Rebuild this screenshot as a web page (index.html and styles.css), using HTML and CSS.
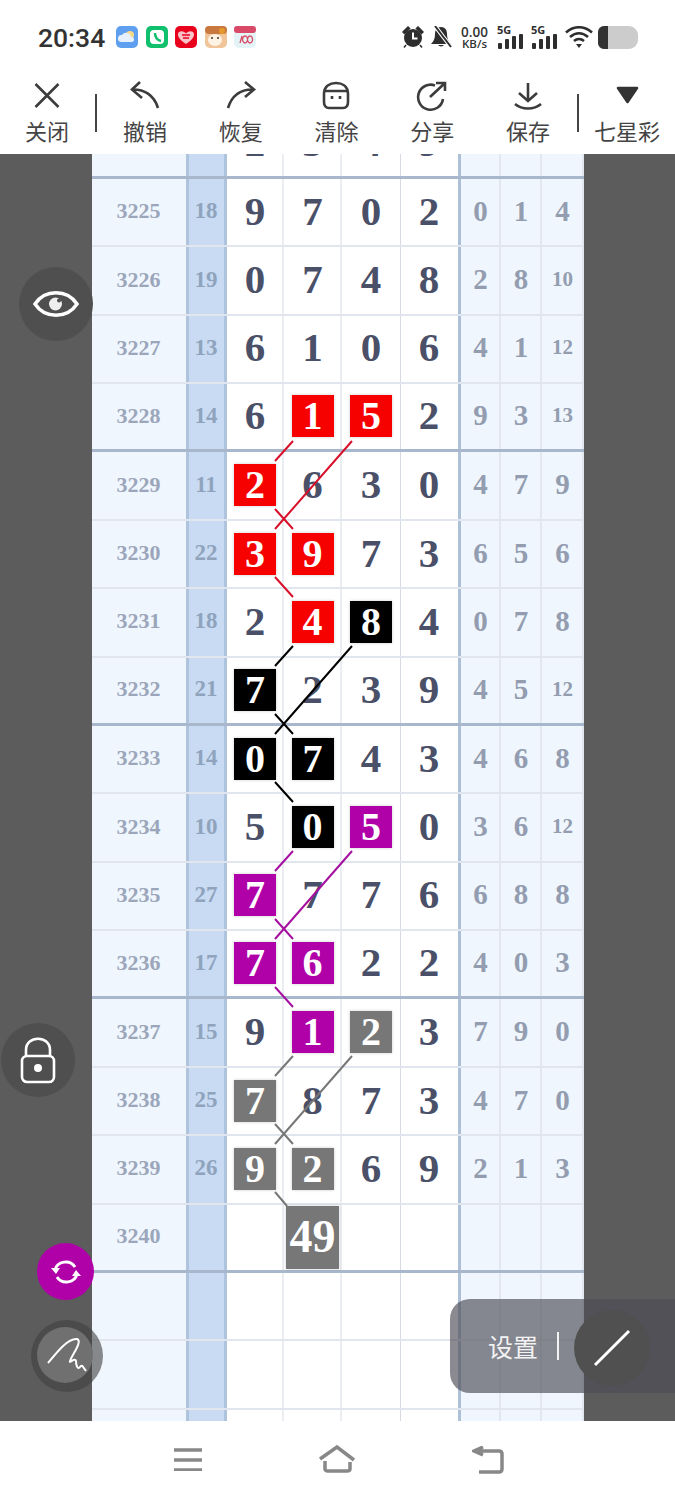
FILE: index.html
```html
<!DOCTYPE html>
<html lang="zh">
<head>
  <meta charset="UTF-8">
  <meta name="viewport" content="width=device-width, initial-scale=1.0">
  <title>七星彩</title>
  <link rel="stylesheet" href="styles.css">
</head>
<body>
  <div class="page">
    <header>
      <div class="status-bar">
        <span class="time">20:34</span>
        <div class="apps">
          <svg viewBox="0 0 22 22"><rect width="22" height="22" rx="5" fill="#5f9fef"/><circle cx="14" cy="9" r="4" fill="#f6d98c"/><path d="M5 16a3.500 3.500 0 0 1 1-7 5 5 0 0 1 9 2 2.500 2.500 0 0 1 1 5z" fill="#e6f1fd"/></svg>
          <svg viewBox="0 0 22 22"><rect width="22" height="22" rx="5" fill="#10c06c"/><rect x="4" y="4" width="14" height="14" rx="4" fill="#fff"/><path d="M9 7c0 4 2 7 6 8" stroke="#10c06c" stroke-width="2.500" fill="none"/></svg>
          <svg viewBox="0 0 22 22"><rect width="22" height="22" rx="5" fill="#e8001c"/><path d="M11 18C5 14 3 11 3 8.500 3 5 8 4 11 7.500 14 4 19 5 19 8.500 19 11 17 14 11 18z" fill="#f9c3c9"/><path d="M7 9h8M8 12h6" stroke="#e8001c" stroke-width="1.500"/></svg>
          <svg viewBox="0 0 22 22"><rect width="22" height="22" rx="5" fill="#f0c59a"/><rect width="22" height="8" rx="4" fill="#c9783f"/><ellipse cx="10" cy="14" rx="7" ry="6" fill="#fdf3e4"/><circle cx="7" cy="12" r="1" fill="#432"/><circle cx="13" cy="12" r="1" fill="#432"/><circle cx="17" cy="5" r="3" fill="#e59a2c"/></svg>
          <svg viewBox="0 0 22 22"><rect width="22" height="22" rx="5" fill="#e4f3f5"/><rect width="22" height="7" rx="3" fill="#d94a68"/><path d="M6 17l2-7M11 10a2.500 3.500 0 1 0 .1 0M16 10a2.500 3.500 0 1 0 .1 0" stroke="#d94a68" stroke-width="1.300" fill="none"/></svg>
        </div>
        <div class="indicators">
          <svg class="w22" viewBox="0 0 22 22" fill="#2e2e2e"><circle cx="11" cy="12" r="9"/><path d="M1 6l5-5 1.500 1.500-5 5zM21 6l-5-5-1.500 1.500 5 5zM4 19l-2 2.500M18 19l2 2.500" stroke="#2e2e2e" stroke-width="1.500"/><path d="M11 6.500v6h4.500" stroke="#fff" stroke-width="2" fill="none"/></svg>
          <svg class="w21" viewBox="0 0 21 22"><path d="M10 1c-4 0-6 3-6 7 0 4-1 7-4 10h20c-3-3-4-6-4-10 0-4-2-7-6-7z" fill="#2e2e2e"/><path d="M7 19a3.500 3 0 0 0 6 0z" fill="#2e2e2e"/><path d="M4 0l16 21" stroke="#fff" stroke-width="4"/><path d="M4 0l16 21" stroke="#2e2e2e" stroke-width="2"/></svg>
          <div class="speed"><b>0.00</b><span>KB/s</span></div>
          <div class="signal">
            <span>5G</span>
            <svg viewBox="0 0 27 15" fill="#2e2e2e"><rect x="1" y="9" width="4" height="6" rx="1"/><rect x="8" y="5" width="4" height="10" rx="1"/><rect x="15" y="2" width="4" height="13" rx="1"/><rect x="22" y="0" width="4" height="15" rx="1"/></svg>
          </div>
          <div class="signal">
            <span>5G</span>
            <svg viewBox="0 0 27 15" fill="#2e2e2e"><rect x="1" y="9" width="4" height="6" rx="1"/><rect x="8" y="5" width="4" height="10" rx="1"/><rect x="15" y="2" width="4" height="13" rx="1"/><rect x="22" y="0" width="4" height="15" rx="1"/></svg>
          </div>
          <svg class="w28" viewBox="0 0 28 22" fill="none" stroke="#2e2e2e" stroke-width="2.600"><path d="M1 6.500c8-7 18-7 26 0M5 11c6-5 12-5 18 0M9 15c3-2.500 7-2.500 10 0"/><path d="M11 18h6l-3 4z" fill="#2e2e2e" stroke="none"/></svg>
          <div class="battery"><div class="battery-level"></div></div>
        </div>
      </div>
      <nav class="toolbar">
        <div class="tool tool-first">
          <svg viewBox="0 0 32 32"><path d="M4.500 4l23 23M27.500 4l-23 23"/></svg>
          <span>关闭</span>
        </div>
        <div class="sep"></div>
        <div class="tool">
          <svg viewBox="0 0 32 32"><path d="M11 2L3 9.500 13 18M3 9.500C15 9 25 15 29 28"/></svg>
          <span>撤销</span>
        </div>
        <div class="tool">
          <svg viewBox="0 0 32 32"><path d="M20 2l9 7.500L20 17M29 9.500C16 9 7 15 3 28"/></svg>
          <span>恢复</span>
        </div>
        <div class="tool">
          <svg viewBox="0 0 32 32"><path d="M4 14C4 6 10 3 16 3 22 3 28 6 28 14V22C28 26 26 28 23 28H9C6 28 4 26 4 22zM4.500 11H27.500M12 16v3M20 16v3"/></svg>
          <span>清除</span>
        </div>
        <div class="tool">
          <svg viewBox="0 0 32 32"><path d="M19 5.500A12.500 12.500 0 1 0 27 19M14 17L29 3M20 3h9v8"/></svg>
          <span>分享</span>
        </div>
        <div class="tool">
          <svg viewBox="0 0 32 32"><path d="M16 3v18M7 13l9 8 9-8M3 24c7 6 19 6 26 0"/></svg>
          <span>保存</span>
        </div>
        <div class="sep"></div>
        <div class="tool tool-last">
          <svg viewBox="0 0 32 32"><path class="solid" d="M7 8h19l-9.500 14z"/></svg>
          <span>七星彩</span>
        </div>
      </nav>
    </header>

    <main>
      <div class="side"></div>
      <div class="chart">
        <div id="rows" class="rows"></div>
        <!-- trend lines, coordinates are page pixels -->
        <svg class="lines" viewBox="92 154 492 1267">
          <g stroke="#d8102a">
            <path d="M293 441L275 461M352 441L275 529M275 509L293 529M275 577L293 597"/>
          </g>
          <g stroke="#000">
            <path d="M293 646L275 666M352 646L275 734M275 714L293 734M275 782L293 802"/>
          </g>
          <g stroke="#a5109f">
            <path d="M293 851L275 871M352 851L275 939M275 919L293 939M275 987L293 1007"/>
          </g>
          <g stroke="#777">
            <path d="M293 1056L275 1076M352 1056L275 1144M275 1124L293 1144M275 1192L287 1206"/>
          </g>
        </svg>
      </div>
      <div class="side"></div>
    </main>

    <footer class="nav-bar">
      <svg viewBox="0 0 30 24" class="nav-menu"><path d="M1 3h28M1 13h28M1 23h28"/></svg>
      <svg viewBox="0 0 38 28" class="nav-home"><path d="M2 14L19 2l17 13M7 16v8c0 1 1 2 2 2h20c2 0 3-1 3-2v-7"/></svg>
      <svg viewBox="0 0 32 28" class="nav-back"><path d="M11 1L2 5l9 4M3 5h24c2 0 3 1 3 3v15c0 2-1 3-3 3H7"/></svg>
    </footer>

    <button class="fab fab-eye">
      <svg viewBox="0 0 46 32" width="46" height="32"><path d="M2 16C12 1 34 1 44 16 34 31 12 31 2 16z" fill="none" stroke="#fff" stroke-width="3.500"/><circle cx="22.500" cy="16" r="6.500" fill="#eee"/><circle cx="26" cy="12.500" r="2" fill="#4f4f4f"/></svg>
    </button>
    <button class="fab fab-lock">
      <svg viewBox="0 0 36 48" width="36" height="48"><path d="M6 20V14C6 -1 30 -1 30 14V20" fill="none" stroke="#fff" stroke-width="2.600"/><rect x="2" y="20" width="32" height="26" rx="5" fill="none" stroke="#fff" stroke-width="2.600"/><circle cx="18" cy="32" r="4" fill="#fff"/></svg>
    </button>
    <button class="fab fab-sync">
      <svg viewBox="0 0 32 32" width="32" height="32" fill="none" stroke="#fff" stroke-width="3"><path d="M5 14C7 5 20 3 25 11M27 18C25 27 12 29 7 21"/><path d="M1 12l5 6 4-6zM31 20l-5-6-4 6z" fill="#fff" stroke="none"/></svg>
    </button>
    <div class="pen-ring">
      <div class="pen">
        <svg viewBox="0 0 56 56" width="56" height="56"><path d="M11 36C20 25 31 11 40 12 46 14 35 28 33 34 32 37 38 30 39 34 39 39 41 43 43 40 45 37 46 40 49 44" fill="none" stroke="#fff" stroke-width="2"/></svg>
      </div>
    </div>
    <div class="settings">
      <span class="settings-label">设置</span>
      <span class="settings-sep"></span>
    </div>
    <button class="fab fab-line">
      <svg viewBox="0 0 40 40" width="40" height="40"><path d="M3 37L37 3" stroke="#fff" stroke-width="3"/></svg>
    </button>
  </div>

  <script>
    // issue, sum, four digits, three spans. r k p g = box colour, '' = empty
    const data = [
      ['', '', '2', '3', '4', '9', '', '', '', 1],
      ['3225', '18', '9', '7', '0', '2', '0', '1', '4'],
      ['3226', '19', '0', '7', '4', '8', '2', '8', '10'],
      ['3227', '13', '6', '1', '0', '6', '4', '1', '12'],
      ['3228', '14', '6', 'r1', 'r5', '2', '9', '3', '13', 1],
      ['3229', '11', 'r2', '6', '3', '0', '4', '7', '9'],
      ['3230', '22', 'r3', 'r9', '7', '3', '6', '5', '6'],
      ['3231', '18', '2', 'r4', 'k8', '4', '0', '7', '8'],
      ['3232', '21', 'k7', '2', '3', '9', '4', '5', '12', 1],
      ['3233', '14', 'k0', 'k7', '4', '3', '4', '6', '8'],
      ['3234', '10', '5', 'k0', 'p5', '0', '3', '6', '12'],
      ['3235', '27', 'p7', '7', '7', '6', '6', '8', '8'],
      ['3236', '17', 'p7', 'p6', '2', '2', '4', '0', '3', 1],
      ['3237', '15', '9', 'p1', 'g2', '3', '7', '9', '0'],
      ['3238', '25', 'g7', '8', '7', '3', '4', '7', '0'],
      ['3239', '26', 'g9', 'g2', '6', '9', '2', '1', '3'],
      ['3240', '', '', 'b49', '', '', '', '', '', 1],
      ['', '', '', '', '', '', '', '', ''],
      ['', '', '', '', '', '', '', '', ''],
      ['', '', '', '', '', '', '', '', '']
    ];

    function digit(v) {
      if (/^[rkpg]/.test(v)) return `<span class="box box-${v[0]}">${v.slice(1)}</span>`;
      if (v[0] === 'b') return `<span class="box box-big">${v.slice(1)}</span>`;
      return v;
    }

    document.getElementById('rows').innerHTML = data.map(d => `
      <div class="row ${d[9] ? 'thick' : ''}">
        <div class="cell no">${d[0]}</div>
        <div class="cell sum">${d[1]}</div>
        <div class="cell num">${digit(d[2])}</div>
        <div class="cell num">${digit(d[3])}</div>
        <div class="cell num mid">${digit(d[4])}</div>
        <div class="cell num last">${digit(d[5])}</div>
        <div class="cell span first ${d[6].length > 1 ? 'small' : ''}">${d[6]}</div>
        <div class="cell span ${d[7].length > 1 ? 'small' : ''}">${d[7]}</div>
        <div class="cell span ${d[8].length > 1 ? 'small' : ''}">${d[8]}</div>
      </div>`).join('');
  </script>
</body>
</html>
```

FILE: styles.css
```css
body {
  margin: 0;
  background-color: #fff;
  font-family: "Noto Sans CJK SC", sans-serif;
  overflow: hidden;
}
.page {
  position: relative;
  width: 675px;
  height: 1500px;
  overflow: hidden;
}
header {
  height: 154px;
  background-color: #fff;
}
.status-bar {
  display: flex;
  align-items: center;
  height: 74px;
  padding: 0 37px 0 38px;
  box-sizing: border-box;
}
.time {
  font-family: Roboto, sans-serif;
  font-weight: 500;
  font-size: 26.5px;
  color: #333;
  margin-right: 11px;
}
.apps {
  display: flex;
  gap: 7.500px;
}
.apps svg {
  width: 22px;
  height: 22px;
}
.indicators {
  display: flex;
  align-items: center;
  gap: 7px;
  margin-left: auto;
}
.w22 { width: 22px; height: 22px; }
.w21 { width: 21px; height: 22px; }
.w28 { width: 28px; height: 22px; margin-right: -2px; }
.signal {
  position: relative;
  width: 27px;
  height: 23px;
  display: flex;
  align-items: flex-end;
}
.signal svg {
  width: 27px;
  height: 15px;
}
.signal span {
  position: absolute;
  left: 0;
  top: -3px;
  font-family: "Open Sans", sans-serif;
  font-size: 11px;
  line-height: 14px;
  font-weight: 700;
  color: #2e2e2e;
}
.speed {
  display: flex;
  flex-direction: column;
  align-items: center;
  width: 31px;
  color: #333;
  font-family: "Open Sans", sans-serif;
}
.speed b {
  font-size: 13.500px;
  line-height: 13px;
  font-weight: 600;
}
.speed span {
  font-size: 11.500px;
  line-height: 10px;
  font-weight: 600;
}
.battery {
  width: 40px;
  height: 23px;
  border-radius: 6px 9px 9px 6px;
  background-color: #ccc;
  overflow: hidden;
}
.battery-level {
  width: 10px;
  height: 100%;
  background-color: #333;
}
.toolbar {
  display: flex;
  height: 80px;
}
.tool {
  flex: 1;
  display: flex;
  flex-direction: column;
  align-items: center;
  padding-top: 6px;
}
.tool-first {
  flex: none;
  width: 94px;
}
.tool-last {
  flex: none;
  width: 96px;
}
.tool svg {
  width: 32px;
  height: 32px;
  fill: none;
  stroke: #3c3c3c;
  stroke-width: 2.600;
}
.tool svg .solid {
  fill: #333;
  stroke: #333;
  stroke-linejoin: round;
}
.tool span {
  margin-top: 3px;
  font-size: 22px;
  line-height: 30px;
  color: #444;
}
.sep {
  width: 2px;
  height: 38px;
  margin: 20px 0 0 1px;
  background-color: #444;
}
main {
  display: flex;
  height: 1267px;
}
.side {
  flex: 1;
  background-color: #5c5c5c;
}
.chart {
  position: relative;
  width: 492px;
  flex: none;
  overflow: hidden;
  background-color: #fff;
}
.rows {
  margin-top: -43.400px;
}
.row {
  display: grid;
  grid-template-columns: 94px 41px 57px 58px 59px 57px 43px 41px 42px;
  grid-template-rows: minmax(0, 1fr);
  height: 68.375px;
  box-sizing: border-box;
  border-bottom: 2px solid #e1e6ee;
  font-family: "Liberation Serif", serif;
  font-weight: bold;
}
.row.thick {
  border-bottom: 3px solid #a9b7cc;
}
.cell {
  display: flex;
  align-items: center;
  justify-content: center;
  box-sizing: border-box;
}
.no {
  background-color: #eff6fe;
  color: #9ba6ba;
  font-size: 22px;
  padding-bottom: 2px;
}
.sum {
  background-color: #c8dbf3;
  border-left: 3px solid #aec4dc;
  border-right: 3px solid #aec4dc;
  color: #8fa3bd;
  font-size: 23px;
  padding-bottom: 2px;
}
.num {
  color: #4a5068;
  font-size: 41px;
  box-shadow: inset -2px 0 0 #eaedf2;
  padding-bottom: 3px;
}
.num.mid {
  box-shadow: inset -1px 0 0 #d5dae3;
}
.num.last {
  box-shadow: none;
}
.span {
  background-color: #eff6fe;
  color: #939daf;
  font-size: 29px;
  box-shadow: inset -2px 0 0 #e3e8f0;
  padding-bottom: 2px;
}
.span.first {
  border-left: 3px solid #aec0d6;
}
.span.small {
  font-size: 21px;
}
.box {
  display: flex;
  flex: none;
  align-items: center;
  justify-content: center;
  width: 42px;
  height: 42px;
  margin-top: 2px;
  padding-bottom: 1px;
  box-sizing: border-box;
  color: #fff;
  font-size: 40px;
  box-shadow: 0 0 3px rgba(0,0,0,0.2);
}
.box-r { background-color: #f70000; }
.box-k { background-color: #000; }
.box-p { background-color: #b000a8; }
.box-g { background-color: #777; }
.box-big {
  width: 53px;
  height: 63px;
  margin-top: 3px;
  font-size: 46px;
  background-color: #777;
}
.lines {
  position: absolute;
  left: 0;
  top: 0;
  width: 492px;
  height: 1267px;
  fill: none;
  stroke-width: 2;
}
.nav-bar {
  position: relative;
  height: 79px;
  background-color: #fff;
}
.nav-bar svg {
  position: absolute;
  fill: none;
  stroke: #888;
  stroke-width: 3.500;
}
.nav-menu { left: 173px; top: 26px; width: 30px; height: 24px; }
.nav-home { left: 318px; top: 24px; width: 38px; height: 28px; }
.nav-back { left: 472px; top: 25px; width: 32px; height: 28px; }
.fab {
  position: absolute;
  display: flex;
  align-items: center;
  justify-content: center;
  padding: 0;
  border: none;
  border-radius: 50%;
  background-color: #4f4f4f;
}
.fab-eye { left: 19px; top: 267px; width: 74px; height: 74px; }
.fab-lock { left: 1px; top: 1023px; width: 74px; height: 74px; }
.fab-sync { left: 37px; top: 1243px; width: 57px; height: 57px; background-color: #b000a8; }
.fab-line { left: 574px; top: 1310px; width: 76px; height: 76px; background-color: #505050; }
.pen-ring {
  position: absolute;
  left: 31px;
  top: 1320px;
  width: 72px;
  height: 72px;
  border-radius: 50%;
  background-color: rgba(64,64,64,0.6);
}
.pen {
  position: absolute;
  left: 6px;
  top: 7px;
  width: 56px;
  height: 56px;
  border-radius: 50%;
  background-color: #707070;
}
.settings {
  position: absolute;
  left: 450px;
  top: 1299px;
  width: 250px;
  height: 94px;
  display: flex;
  align-items: center;
  box-sizing: border-box;
  padding-left: 38px;
  border-radius: 20px;
  background-color: rgba(75,75,85,0.65);
}
.settings-label {
  font-size: 25px;
  color: #f2f2f2;
}
.settings-sep {
  width: 2px;
  height: 28px;
  margin-left: 19px;
  background-color: #f2f2f2;
}
```
